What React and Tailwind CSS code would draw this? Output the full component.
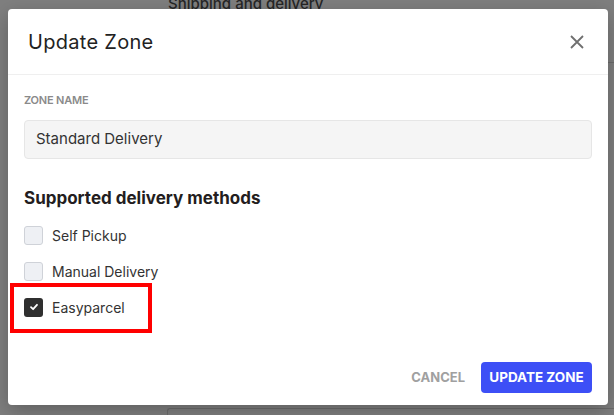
import React from "react";

function Box({ checked }) {
  if (checked) {
    return (
      <div className="w-[19px] h-[19px] rounded-[3px] bg-[#2f2f2f] flex items-center justify-center">
        <svg width="10" height="10" viewBox="0 0 10 10">
          <path d="M2 5.2 L4.1 7.2 L8 2.8" fill="none" stroke="#fff" strokeWidth="1.8" strokeLinecap="round" strokeLinejoin="round" />
        </svg>
      </div>
    );
  }
  return <div className="w-[19px] h-[19px] rounded-[3px] bg-[#eef0f4] border border-[#cfd2d8]" />;
}

export default function App() {
  return (
    <div className="relative w-[614px] h-[415px] overflow-hidden bg-[#7f7f7f]" style={{ fontFamily: "Inter, 'Noto Sans', sans-serif" }}>
      <div className="absolute left-[168px] top-[-7px] text-[15px] font-medium text-[#262626]">Shipping and delivery</div>
      <div className="absolute left-[608px] top-[62px] w-[10px] h-px bg-[#6c6c6c]" />
      <div className="absolute left-[167px] top-[408px] w-[460px] h-[20px] border-l border-t border-[#6c6c6c] rounded-tl-[3px]" />
      <div className="absolute left-[8px] top-[9px] w-[600px] h-[396px] bg-white rounded-[4px] shadow-[0_6px_20px_rgba(0,0,0,0.25)] flex flex-col">
        <div className="h-[66px] flex items-center justify-between pl-[20px] pr-[24px] border-b border-[#efefef]">
          <div className="text-[20px] text-[#222] tracking-[0.3px]">Update Zone</div>
          <svg width="14" height="14" viewBox="0 0 14 14">
            <path d="M1 1 L13 13 M13 1 L1 13" stroke="#6f6f6f" strokeWidth="1.8" />
          </svg>
        </div>
        <div className="flex-1 px-[16px] pt-[17px]">
          <div className="text-[11px] leading-[16px] font-semibold text-[#8a8a8a] tracking-[-0.2px]">ZONE NAME</div>
          <div className="mt-[12px] h-[39px] w-[568px] rounded-[4px] bg-[#f5f5f5] border border-[#e6e6e6] flex items-center pl-[11px] text-[15px] text-[#333]">Standard Delivery</div>
          <div className="mt-[27px] text-[17px] leading-[24px] font-bold text-[#231d20]">Supported delivery methods</div>
          <div className="mt-[7px] flex flex-col">
            <div className="h-[36px] flex items-center gap-[9px]">
              <Box />
              <span className="text-[14px] text-[#333]">Self Pickup</span>
            </div>
            <div className="h-[36px] flex items-center gap-[9px]">
              <Box />
              <span className="text-[14px] text-[#333]">Manual Delivery</span>
            </div>
            <div className="relative h-[36px] flex items-center gap-[9px]">
              <div className="absolute left-[-14px] top-[-6px] w-[142px] h-[50px] border-[4px] border-[#ff0000]" />
              <Box checked />
              <span className="text-[14px] text-[#333]">Easyparcel</span>
            </div>
          </div>
        </div>
        <div className="flex items-center justify-end gap-[16px] pr-[16px] pb-[12px]">
          <span className="text-[13px] font-bold text-[#a0a0a0]">CANCEL</span>
          <div className="h-[31px] w-[111px] rounded-[4px] bg-[#3d4ff6] flex items-center justify-center text-[13.5px] font-bold text-white">UPDATE ZONE</div>
        </div>
      </div>
    </div>
  );
}
